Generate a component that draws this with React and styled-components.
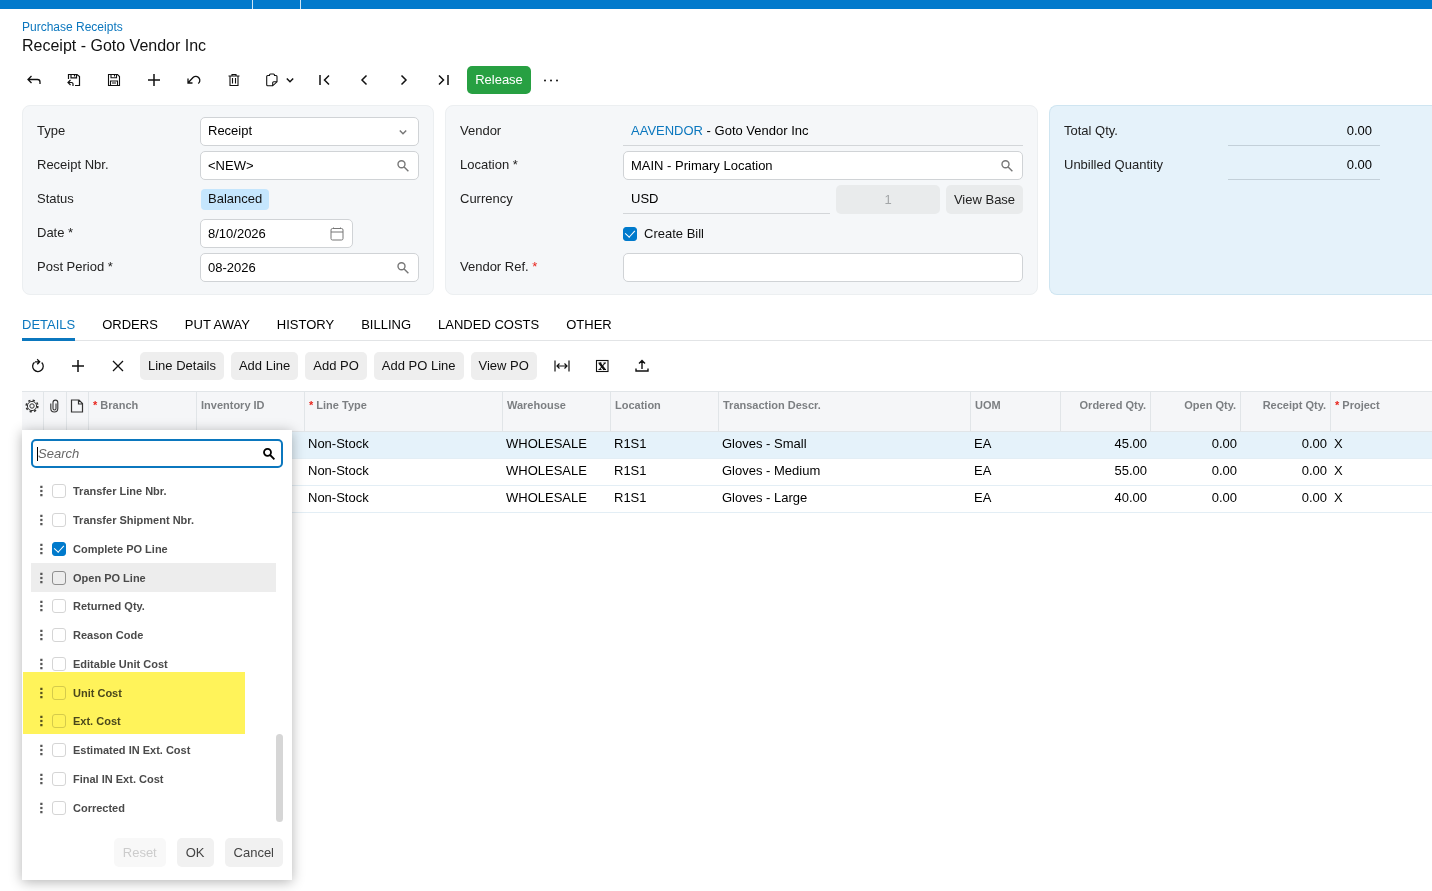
import React from 'react';
import styled, { createGlobalStyle } from "styled-components";


const GlobalStyle = createGlobalStyle`
    *{
        margin:0;
        padding:0;
        box-sizing:border-box;
    }
    body{
        min-height:100vh;
        background:#fff;
        color:#111;
        font-family:"Liberation Sans", Arial, sans-serif;
        font-size:13px;
        line-height:16px;
    }
    button, input, select{
        font:inherit;
        color:inherit;
    }
    button{
        border:none;
        cursor:pointer;
    }
    a{
        color:#0b77be;
        text-decoration:none;
    }
`

const Icon = ({ children, size = 16, width = 1.2 }) => (
    <svg width={size} height={size} viewBox="0 0 16 16" fill="none" stroke="currentColor" strokeWidth={width} aria-hidden="true">
        {children}
    </svg>
);

const BackIcon = () => <Icon width={1.3}><path d="M5.500 4 2 7.500 5.500 11M2 7.500h9.500a2.500 2.500 0 0 1 2.500 2.500V12" /></Icon>;
const SaveCloseIcon = () => (
    <Icon width={1.2}>
        <path d="M2.500 7V2.500h8.500l2.500 2v9H9M5 2.500v3.300h5.500V2.500M8.500 3v1.500" />
        <path d="M4.500 8 2 10.500 4.500 13M2 10.500h3.500a1.500 1.500 0 0 1 1.500 1.500v2" />
    </Icon>
);
const SaveIcon = () => (
    <Icon width={1.1}>
        <path d="M2.500 2.500h9l2 2v9h-11zM5 2.500v3.300h5.500V2.500M8.500 3v1.500M4.500 13.500V9h7v4.500M6 11h4" />
    </Icon>
);
const PlusIcon = () => <Icon width={1.5}><path d="M8 2v12M2 8h12" /></Icon>;
const UndoIcon = () => <Icon width={1.3}><path d="M2 6.500v4.500h4.500M2.200 10.800 7 5.500a4 4 0 0 1 6 .5c1.500 2 .8 4.300-.8 5.500" /></Icon>;
const TrashIcon = () => (
    <Icon width={1.1}>
        <path d="M2.500 4h11M6 4V2.500h4V4M4 4v9.500h8V4M6.500 6v5.500M9.500 6v5.500" />
    </Icon>
);
const ClipIcon = () => (
    <Icon width={1.1}>
        <path d="M5.500 3.500H3.700a1 1 0 0 0-1 1v8.300a1 1 0 0 0 1 1h5l4.300-4V4.500a1 1 0 0 0-1-1h-1.500M5.500 4V3a1 1 0 0 1 1-1h3a1 1 0 0 1 1 1v1M8.700 13.500v-2.700a1 1 0 0 1 1-1H13" />
    </Icon>
);
const ChevronDown = () => <Icon width={1.5}><path d="m4.800 6.500 3.200 3.200 3.200-3.200" /></Icon>;
const FirstIcon = () => <Icon width={1.5}><path d="M4 3v10M13 3.500 8.500 8l4.500 4.500" /></Icon>;
const PrevIcon = () => <Icon width={1.5}><path d="M10.500 3.500 6 8l4.500 4.500" /></Icon>;
const NextIcon = () => <Icon width={1.5}><path d="M5.500 3.500 10 8l-4.500 4.500" /></Icon>;
const LastIcon = () => <Icon width={1.5}><path d="M12 3v10M3 3.500 7.500 8 3 12.500" /></Icon>;
const MoreIcon = () => (
    <Icon>
        <g fill="currentColor" stroke="none">
            <circle cx="2" cy="8.500" r="1" /><circle cx="8" cy="8.500" r="1" /><circle cx="14" cy="8.500" r="1" />
        </g>
    </Icon>
);
const SearchIcon = ({ width = 1.4 }) => <Icon width={width}><circle cx="6.500" cy="6.300" r="3.500" /><path d="m9.100 9 4.300 4.300" /></Icon>;
const CalendarIcon = () => <Icon width={1}><rect x="2" y="2.500" width="12" height="11.500" rx="1.500" /><path d="M2 6h12M4.500 1.500v1M11.500 1.500v1" /></Icon>;
const RefreshIcon = () => <Icon width={1.3}><path d="M4.500 4.200A5.300 5.300 0 1 0 11.700 4.500M5 3.800h4.500M7.200 1.300 9.700 3.800 7.200 6.300" /></Icon>;
const CloseIcon = () => <Icon width={1.3}><path d="m3 3 10 10M13 3 3 13" /></Icon>;
const FitIcon = () => <Icon width={1.2}><path d="M1 2.500v11M15 2.500v11M3 8h10M5.500 5.500 3 8l2.500 2.500M10.500 5.500 13 8l-2.500 2.500" /></Icon>;
const ExcelIcon = () => (
    <Icon width={1.1}>
        <rect x="2.500" y="2.500" width="11.500" height="11" />
        <path d="m5.500 5 5 6.500" strokeWidth="2.300" />
        <path d="m11 5-5.500 6.500M4.500 5h3M9.500 5h2.500M4.500 11.500h3M9 11.500h3" />
    </Icon>
);
const UploadIcon = () => <Icon width={1.4}><path d="M8 11V3M5 5.500 8 2.500l3 3M2 10.500v2.500h12v-2.500" /></Icon>;
const GearIcon = () => (
    <Icon width={1}>
        <circle cx="8" cy="8" r="4.600" />
        <circle cx="8" cy="8" r="2.200" />
        <circle cx="8" cy="8" r="5.800" strokeWidth="1.600" strokeDasharray="2.200 2.355" />
    </Icon>
);
const PaperclipIcon = () => <Icon width={1.1}><path d="M10 5.500v5a1.500 1.500 0 0 1-3 0V4.500a2.300 2.300 0 0 1 4.800 0v6a3.500 3.500 0 0 1-7 0V5.500" /></Icon>;
const NoteIcon = () => <Icon width={1.2}><path d="M2.500 2h7.500l3.500 3.500V14h-11zM9.500 2v4h4" /></Icon>;
const DragIcon = () => (
    <Icon size={12}>
        <g fill="#555" stroke="none">
            <rect x="7" y="1" width="3" height="3" /><rect x="7" y="6.500" width="3" height="3" /><rect x="7" y="12" width="3" height="3" />
        </g>
    </Icon>
);

const tabs = ["DETAILS", "ORDERS", "PUT AWAY", "HISTORY", "BILLING", "LANDED COSTS", "OTHER"];
const lineActions = ["Line Details", "Add Line", "Add PO", "Add PO Line", "View PO"];

const columns = [
    { title: "Branch", width: 108, required: true },
    { title: "Inventory ID", width: 108 },
    { title: "Line Type", width: 198, required: true },
    { title: "Warehouse", width: 108 },
    { title: "Location", width: 108 },
    { title: "Transaction Descr.", width: 252 },
    { title: "UOM", width: 90 },
    { title: "Ordered Qty.", width: 90, right: true },
    { title: "Open Qty.", width: 90, right: true },
    { title: "Receipt Qty.", width: 90, right: true },
    { title: "Project", required: true },
];

const rows = [
    ["", "", "Non-Stock", "WHOLESALE", "R1S1", "Gloves - Small", "EA", "45.00", "0.00", "0.00", "X"],
    ["", "", "Non-Stock", "WHOLESALE", "R1S1", "Gloves - Medium", "EA", "55.00", "0.00", "0.00", "X"],
    ["", "", "Non-Stock", "WHOLESALE", "R1S1", "Gloves - Large", "EA", "40.00", "0.00", "0.00", "X"],
];

const options = [
    { label: "Transfer Line Nbr." },
    { label: "Transfer Shipment Nbr." },
    { label: "Complete PO Line", checked: true },
    { label: "Open PO Line", hover: true },
    { label: "Returned Qty." },
    { label: "Reason Code" },
    { label: "Editable Unit Cost" },
    { label: "Unit Cost" },
    { label: "Ext. Cost" },
    { label: "Estimated IN Ext. Cost" },
    { label: "Final IN Ext. Cost" },
    { label: "Corrected" },
];

const ColumnChooser = () => (
    <Popup>
        <SearchBox>
            <Caret />
            <input placeholder="Search" aria-label="Search columns" type="text" />
            <SearchIcon width={1.8} />
        </SearchBox>
        <ListArea>
            <OptionList>
                {options.map((option) => (
                    <Option key={option.label} $hover={option.hover}>
                        <DragIcon />
                        <Checkbox type="checkbox" defaultChecked={option.checked} $strong={option.hover} />
                        {option.label}
                    </Option>
                ))}
            </OptionList>
            <Track><Thumb /></Track>
        </ListArea>
        <PopupFooter>
            <PopupButton disabled>Reset</PopupButton>
            <PopupButton>OK</PopupButton>
            <PopupButton>Cancel</PopupButton>
        </PopupFooter>
        <Marker />
    </Popup>
);

const App = () => {
    return (
        <>
            <GlobalStyle />
            <TopBar><TopSlot /></TopBar>
            <Page>
                <Crumb href="#receipts">Purchase Receipts</Crumb>
                <Title>Receipt - Goto Vendor Inc</Title>

                <Toolbar>
                    <IconButton aria-label="Back"><BackIcon /></IconButton>
                    <IconButton aria-label="Save and close"><SaveCloseIcon /></IconButton>
                    <IconButton aria-label="Save"><SaveIcon /></IconButton>
                    <IconButton aria-label="Add"><PlusIcon /></IconButton>
                    <IconButton aria-label="Undo"><UndoIcon /></IconButton>
                    <IconButton aria-label="Delete"><TrashIcon /></IconButton>
                    <IconButton aria-label="Clipboard" $wide><ClipIcon /><ChevronDown /></IconButton>
                    <IconButton aria-label="First"><FirstIcon /></IconButton>
                    <IconButton aria-label="Previous"><PrevIcon /></IconButton>
                    <IconButton aria-label="Next"><NextIcon /></IconButton>
                    <IconButton aria-label="Last"><LastIcon /></IconButton>
                    <ReleaseButton>Release</ReleaseButton>
                    <IconButton aria-label="More"><MoreIcon /></IconButton>
                </Toolbar>

                <Cards>
                    <Card>
                        <Row>
                            <label htmlFor="type">Type</label>
                            <Field>
                                <select id="type"><option>Receipt</option></select>
                                <ChevronDown />
                            </Field>
                        </Row>
                        <Row>
                            <label htmlFor="nbr">Receipt Nbr.</label>
                            <Field><input id="nbr" type="text" defaultValue="<NEW>" /><SearchIcon /></Field>
                        </Row>
                        <Row>
                            <span>Status</span>
                            <Badge>Balanced</Badge>
                        </Row>
                        <Row>
                            <label htmlFor="date">Date *</label>
                            <Field $short><input id="date" type="text" defaultValue="8/10/2026" /><CalendarIcon /></Field>
                        </Row>
                        <Row>
                            <label htmlFor="period">Post Period *</label>
                            <Field><input id="period" type="text" defaultValue="08-2026" /><SearchIcon /></Field>
                        </Row>
                    </Card>

                    <Card>
                        <Row>
                            <span>Vendor</span>
                            <Plain><a href="#vendor">AAVENDOR</a>&nbsp;- Goto Vendor Inc</Plain>
                        </Row>
                        <Row>
                            <label htmlFor="location">Location *</label>
                            <Field><input id="location" type="text" defaultValue="MAIN - Primary Location" /><SearchIcon /></Field>
                        </Row>
                        <Row>
                            <span>Currency</span>
                            <Currency>
                                <Plain>USD</Plain>
                                <Rate type="text" aria-label="Currency rate" defaultValue="1" disabled />
                                <BaseButton>View Base</BaseButton>
                            </Currency>
                        </Row>
                        <Row>
                            <span />
                            <CheckLabel><Checkbox type="checkbox" defaultChecked />Create Bill</CheckLabel>
                        </Row>
                        <Row>
                            <label htmlFor="ref">Vendor Ref. <Star>*</Star></label>
                            <Field><input id="ref" type="text" /></Field>
                        </Row>
                    </Card>

                    <Card $summary>
                        <Row>
                            <span>Total Qty.</span>
                            <Plain $total>0.00</Plain>
                        </Row>
                        <Row>
                            <span>Unbilled Quantity</span>
                            <Plain $total>0.00</Plain>
                        </Row>
                    </Card>
                </Cards>

                <Tabs>
                    {tabs.map((tab, i) => (
                        <Tab key={tab} $active={i === 0}>{tab}</Tab>
                    ))}
                </Tabs>

                <Toolbar $inner>
                    <IconButton aria-label="Refresh"><RefreshIcon /></IconButton>
                    <IconButton aria-label="Add row"><PlusIcon /></IconButton>
                    <IconButton aria-label="Delete row"><CloseIcon /></IconButton>
                    <Actions>
                        {lineActions.map((action) => <ActionButton key={action}>{action}</ActionButton>)}
                    </Actions>
                    <IconButton aria-label="Fit to screen"><FitIcon /></IconButton>
                    <IconButton aria-label="Export to Excel"><ExcelIcon /></IconButton>
                    <IconButton aria-label="Upload"><UploadIcon /></IconButton>
                </Toolbar>

                <GridArea>
                    <Table>
                        <colgroup>
                            <col width="22" /><col width="23" /><col width="22" />
                            {columns.map((c) => <col key={c.title} width={c.width} />)}
                        </colgroup>
                        <thead>
                            <tr>
                                <IconHead aria-label="Settings"><GearIcon /></IconHead>
                                <IconHead aria-label="Files"><PaperclipIcon /></IconHead>
                                <IconHead aria-label="Notes"><NoteIcon /></IconHead>
                                {columns.map((c) => (
                                    <Head key={c.title} $right={c.right}>
                                        {c.required && <Star>* </Star>}{c.title}
                                    </Head>
                                ))}
                            </tr>
                        </thead>
                        <tbody>
                            {rows.map((row, r) => (
                                <Line key={r} $selected={r === 0}>
                                    <Cell /><Cell /><Cell />
                                    {row.map((value, i) => <Cell key={i} $right={columns[i].right}>{value}</Cell>)}
                                </Line>
                            ))}
                        </tbody>
                    </Table>
                    <ColumnChooser />
                </GridArea>
            </Page>
        </>
    );
}

export default App;

const TopBar = styled.div`
    height:9px;
    background:#027acc;
    padding-left:252px;
`

const TopSlot = styled.div`
    width:49px;
    height:9px;
    border-left:1px solid #cfe6f6;
    border-right:1px solid #cfe6f6;
`

const Page = styled.main`
    padding:10px 0 0 22px;
`

const Crumb = styled.a`
    display:block;
    font-size:12px;
`

const Title = styled.h1`
    padding-top:1px;
    font-size:16px;
    line-height:20px;
    font-weight:normal;
`

const Toolbar = styled.div`
    display:flex;
    align-items:center;
    margin:${(p) => (p.$inner ? '11px 0 11px -4px' : '10px 0 11px -8px')};
    height:28px;
`

const IconButton = styled.button`
    display:flex;
    align-items:center;
    justify-content:center;
    gap:2px;
    flex:none;
    width:${(p) => (p.$wide ? '50px' : '40px')};
    height:28px;
    padding-left:${(p) => (p.$wide ? '4px' : 0)};
    background:none;
`

const ReleaseButton = styled.button`
    width:64px;
    height:28px;
    margin-left:3px;
    border-radius:5px;
    background:#27a042;
    color:#fff;
`

const Actions = styled.div`
    display:flex;
    gap:7px;
    padding:0 5px 0 2px;
`

const ActionButton = styled.button`
    height:28px;
    padding:0 8px;
    border-radius:5px;
    background:#eee;
    white-space:nowrap;
`

const Cards = styled.div`
    display:grid;
    grid-template-columns:412px minmax(0, 1fr) 383px;
    gap:11px;
`

const Card = styled.section`
    display:flex;
    flex-direction:column;
    gap:5px;
    padding:11px 14px 12px;
    border:1px solid ${(p) => (p.$summary ? '#cfe5f1' : '#eceff1')};
    border-right-width:${(p) => (p.$summary ? 0 : '1px')};
    border-radius:${(p) => (p.$summary ? '8px 0 0 8px' : '8px')};
    background:${(p) => (p.$summary ? '#e5f2fa' : '#f5f7f9')};
`

const Row = styled.div`
    display:grid;
    grid-template-columns:163px minmax(0, 1fr);
    align-items:center;
    height:29px;
    > :first-child{
        padding-bottom:2px;
        color:#222;
    }
`

const Field = styled.div`
    display:flex;
    align-items:center;
    width:${(p) => (p.$short ? '153px' : '100%')};
    height:29px;
    padding:0 7px;
    border:1px solid #d0d3d6;
    border-radius:5px;
    background:#fff;
    color:#777;
    input, select{
        flex:1;
        min-width:0;
        height:25px;
        padding-bottom:1px;
        border:none;
        outline:none;
        background:none;
        color:#000;
        appearance:none;
    }
`

const Plain = styled.div`
    display:flex;
    align-items:center;
    height:29px;
    padding:0 8px;
    border-bottom:1px solid ${(p) => (p.$total ? '#c3d0d9' : '#d3d6d9')};
    color:#000;
    ${(p) => p.$total && `
        width:152px;
        margin-left:1px;
        justify-content:flex-end;
    `}
`

const Badge = styled.span`
    justify-self:start;
    padding:2px 7px 3px;
    margin-left:1px;
    border-radius:4px;
    background:#c5e6fd;
`

const Currency = styled.div`
    display:grid;
    grid-template-columns:minmax(0, 1fr) 104px 77px;
    gap:6px;
`

const Rate = styled.input`
    height:29px;
    border:none;
    border-radius:5px;
    background:#e9ebec;
    color:#a3a6a8;
    text-align:center;
`

const BaseButton = styled.button`
    height:29px;
    border-radius:5px;
    background:#e9ebec;
    color:#222;
`

const CheckLabel = styled.label`
    display:flex;
    align-items:center;
    gap:7px;
`

const Checkbox = styled.input`
    display:flex;
    align-items:center;
    justify-content:center;
    flex:none;
    width:14px;
    height:14px;
    border:1px solid ${(p) => (p.$strong ? '#8f8f8f' : '#d5d5d5')};
    border-radius:3px;
    appearance:none;
    &:checked{
        background:#007acc;
        border-color:#007acc;
    }
    &:checked::after{
        content:"";
        width:5px;
        height:8px;
        margin-bottom:2px;
        border:solid #fff;
        border-width:0 1px 1px 0;
        transform:rotate(42deg);
    }
`

const Star = styled.span`
    color:#e8241c;
`

const Tabs = styled.div`
    display:flex;
    gap:27px;
    margin-top:13px;
    border-bottom:1px solid #e2e4e6;
`

const Tab = styled.button`
    height:33px;
    margin-bottom:-1px;
    padding-top:3px;
    border-bottom:3px solid ${(p) => (p.$active ? '#0b77be' : 'transparent')};
    background:none;
    color:${(p) => (p.$active ? '#0b77be' : '#000')};
`

const GridArea = styled.div`
    position:relative;
`

const Table = styled.table`
    width:100%;
    table-layout:fixed;
    border-collapse:separate;
    border-spacing:0;
`

const Head = styled.th`
    height:41px;
    padding:5px 4px 0;
    border:solid #e1e5e8;
    border-width:1px 1px 1px 0;
    background:#f5f6f8;
    color:#7c7f82;
    font-size:11px;
    text-align:${(p) => (p.$right ? 'right' : 'left')};
    vertical-align:top;
    white-space:nowrap;
    &:last-child{
        border-right:none;
    }
`

const IconHead = styled(Head)`
    padding:6px 0 0 2px;
    color:#333;
`

const Line = styled.tr`
    background:${(p) => (p.$selected ? '#e5f2fa' : '#fff')};
    td{
        border-bottom:1px solid #e3eef5;
    }
`

const Cell = styled.td`
    height:27px;
    padding:0 4px 3px 3px;
    color:#000;
    text-align:${(p) => (p.$right ? 'right' : 'left')};
    white-space:nowrap;
`

const Popup = styled.div`
    position:absolute;
    top:39px;
    left:0;
    width:270px;
    padding:9px 9px 13px;
    background:#fff;
    box-shadow:0 2px 12px rgba(0,0,0,0.3);
`

const SearchBox = styled.div`
    display:flex;
    align-items:center;
    height:29px;
    padding:0 4px;
    border:2px solid #0b77be;
    border-radius:5px;
    color:#000;
    input{
        flex:1;
        min-width:0;
        border:none;
        outline:none;
    }
    input::placeholder{
        color:#666;
        font-style:italic;
    }
`

const Caret = styled.span`
    width:1px;
    height:14px;
    background:#000;
`

const ListArea = styled.div`
    display:flex;
    height:345px;
    margin-top:9px;
`

const OptionList = styled.div`
    display:flex;
    flex-direction:column;
    flex:1;
`

const Option = styled.label`
    display:flex;
    align-items:center;
    flex:1;
    padding-left:4px;
    background:${(p) => (p.$hover ? '#ededed' : 'none')};
    color:#4a4a4a;
    font-size:11px;
    font-weight:bold;
    input{
        margin:0 7px 0 5px;
    }
`

const Track = styled.div`
    display:flex;
    align-items:flex-end;
    width:7px;
`

const Thumb = styled.div`
    width:7px;
    height:88px;
    border-radius:4px;
    background:#d6d6d6;
`

const PopupFooter = styled.div`
    display:flex;
    justify-content:flex-end;
    gap:11px;
    margin-top:16px;
`

const PopupButton = styled.button`
    height:29px;
    padding:0 9px;
    border-radius:5px;
    background:#f1f1f1;
    color:#444;
    &:disabled{
        background:#f8f8f8;
        color:#ccc;
    }
`

/* highlighter stroke laid over the cost columns */
const Marker = styled.div`
    position:absolute;
    top:242px;
    left:1px;
    width:222px;
    height:62px;
    background:#fff35a;
    mix-blend-mode:multiply;
    pointer-events:none;
`
